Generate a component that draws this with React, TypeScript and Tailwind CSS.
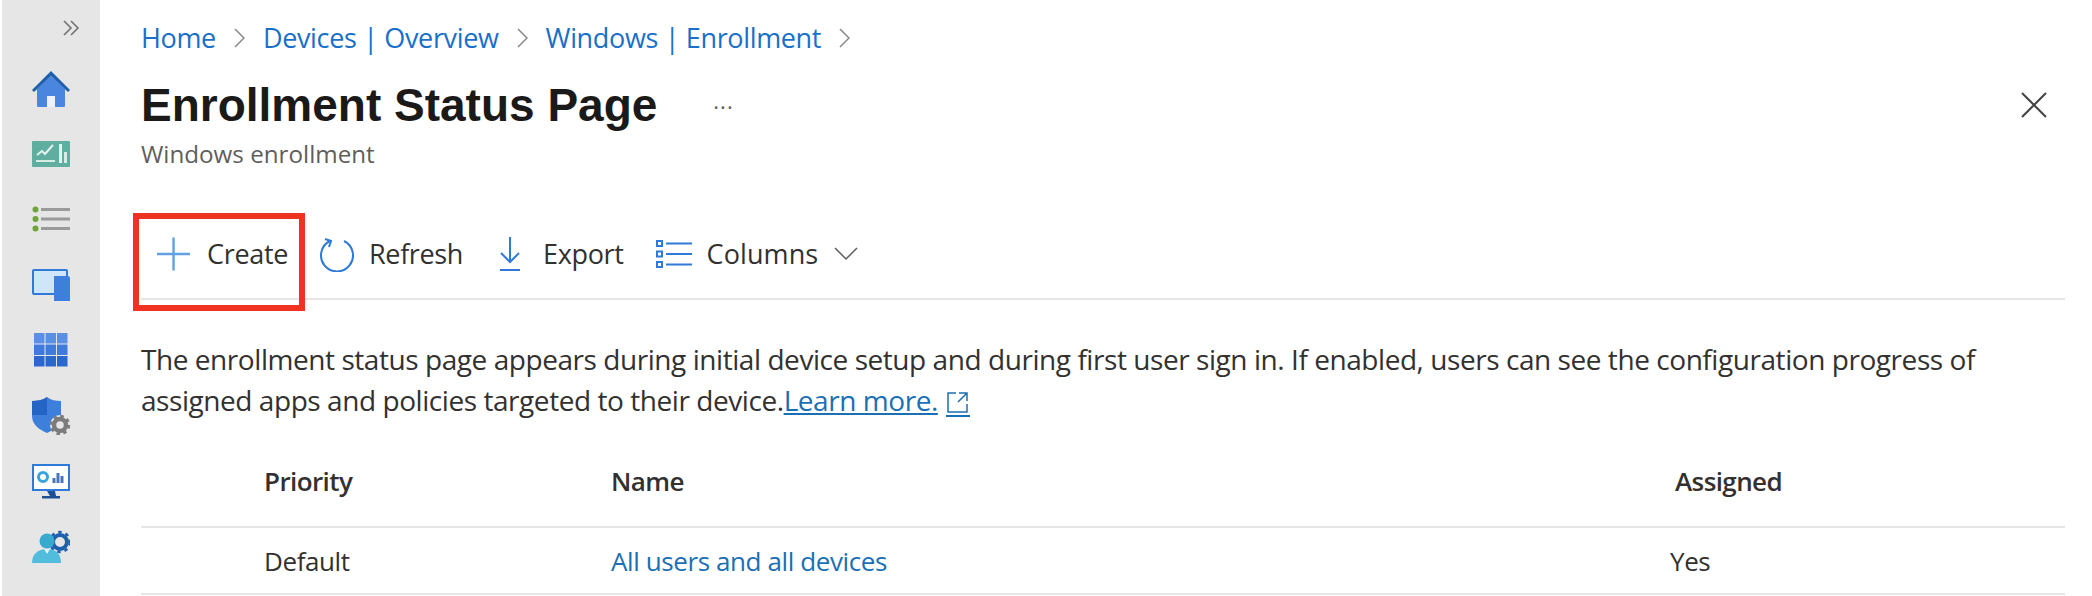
import React from "react";

const font = "font-['Open_Sans',sans-serif]";

function HomeIcon() {
  return (
    <svg width="38" height="38" viewBox="0 0 38 38">
      <path d="M5 19 19 6l14 13v17a1 1 0 0 1-1 1H6a1 1 0 0 1-1-1z" fill="#4a86e0" />
      <path d="M0 20 19 1l19 19-2 2L19 6 2 22z" fill="#1f5fae" />
      <rect x="15" y="26" width="8" height="11" fill="#eef1f5" />
    </svg>
  );
}

function ChartIcon() {
  return (
    <svg width="38" height="26" viewBox="0 0 38 26">
      <rect width="38" height="26" rx="1" fill="#5fae9f" />
      <path d="M5 14l5-4 3 3 8-9" stroke="#e4f3ef" strokeWidth="2" fill="none" />
      <rect x="4" y="19" width="19" height="2" fill="#d6ece6" />
      <rect x="27" y="3" width="3" height="19" fill="#e4f3ef" />
      <rect x="32" y="11" width="3" height="11" fill="#d6ece6" />
    </svg>
  );
}

function ListIcon() {
  return (
    <svg width="38" height="26" viewBox="0 0 38 26">
      <circle cx="3.500" cy="3.500" r="3" fill="#6fa53a" />
      <circle cx="3.500" cy="13" r="3" fill="#6fa53a" />
      <circle cx="3.500" cy="22.500" r="3" fill="#6fa53a" />
      <rect x="9" y="2" width="29" height="3" fill="#9a9a9a" />
      <rect x="9" y="11.500" width="29" height="3" fill="#9a9a9a" />
      <rect x="9" y="21" width="29" height="3" fill="#9a9a9a" />
    </svg>
  );
}

function DevicesIcon() {
  return (
    <svg width="38" height="32" viewBox="0 0 38 32">
      <rect x="1" y="1" width="34" height="24" rx="1" fill="#cfe6fa" stroke="#2f7ad8" strokeWidth="2" />
      <path d="M22 7h14a2 2 0 0 1 2 2v23H22z" fill="#3f7fdc" />
    </svg>
  );
}

function GridIcon() {
  const cells = [0, 11.500, 23];
  return (
    <svg width="34" height="34" viewBox="0 0 34 34">
      {cells.map((y, r) =>
        cells.map((x) => (
          <rect
            key={`${x}-${y}`}
            x={x}
            y={y}
            width="10.500"
            height="10.500"
            fill={r === 0 ? "#5a90e4" : r === 1 ? "#3f7bdb" : "#2a68cc"}
          />
        ))
      )}
    </svg>
  );
}

function ShieldIcon() {
  return (
    <svg width="38" height="38" viewBox="0 0 38 38">
      <path d="M15 0c4 3 9 4 14 4v15c0 9-7 14-14 17C8 33 0 28 0 19V4c5 0 11-1 15-4z" fill="#3f7fdc" />
      <path d="M15 0v18H0V4c5 0 11-1 15-4z" fill="#2464c4" />
      <circle cx="28" cy="28" r="10" fill="#e6e6e6" />
      <circle cx="28" cy="28" r="6" fill="none" stroke="#7b7b7b" strokeWidth="4.500" />
      <circle cx="28" cy="28" r="9" fill="none" stroke="#7b7b7b" strokeWidth="2.500" strokeDasharray="3.500 3.570" />
    </svg>
  );
}

function MonitorIcon() {
  return (
    <svg width="38" height="35" viewBox="0 0 38 35">
      <rect x="1" y="1" width="36" height="25" fill="#fff" stroke="#2f7ad8" strokeWidth="2" />
      <circle cx="11" cy="13" r="4.500" fill="none" stroke="#38a3dc" strokeWidth="3" />
      <path d="M22 19v-5M26 19V9M30 19v-7" stroke="#4a74b8" strokeWidth="3" />
      <path d="M15 27h8l1 5h-6z" fill="#1d4f96" />
      <rect x="10" y="32" width="18" height="2.500" fill="#1d4f96" />
    </svg>
  );
}

function UserGearIcon() {
  return (
    <svg width="38" height="33" viewBox="0 0 38 33">
      <circle cx="28" cy="12" r="7" fill="none" stroke="#1f5fae" strokeWidth="4" />
      <circle cx="28" cy="12" r="10" fill="none" stroke="#1f5fae" strokeWidth="2.500" strokeDasharray="3.500 4" />
      <circle cx="15" cy="11" r="7.500" fill="#38a9cf" />
      <path d="M0 33c0-9 6-14 15-14s14 5 14 14z" fill="#52bcdc" />
      <path d="M12 19h6l-3 5z" fill="#e6f5fa" />
    </svg>
  );
}

function SideItem({ children }: { children: React.ReactNode }) {
  return <div className="h-[65.4px] flex items-center justify-center shrink-0 blur-[0.5px]">{children}</div>;
}

function Chevron() {
  return (
    <svg width="11" height="20" viewBox="0 0 11 20" fill="none" stroke="#8a8886" strokeWidth="1.500">
      <path d="M1 1l9 9-9 9" />
    </svg>
  );
}

function ToolText({ children }: { children: React.ReactNode }) {
  return <span className="text-[27px] text-[#323130] tracking-[-0.35px]">{children}</span>;
}

export default function App() {
  return (
    <div className={`w-[2092px] h-[596px] overflow-hidden flex bg-white ${font}`}>
      <aside className="ml-[2px] w-[98px] shrink-0 bg-[#e6e6e6] flex flex-col overflow-hidden">
        <div className="h-[56px] shrink-0 flex justify-end items-center pr-[20px]">
          <svg width="17" height="16" viewBox="0 0 17 16" fill="none" stroke="#6f6f6f" strokeWidth="1.500">
            <path d="M1 1l7 7-7 7M8 1l7 7-7 7" />
          </svg>
        </div>
        <SideItem><HomeIcon /></SideItem>
        <SideItem><ChartIcon /></SideItem>
        <SideItem><ListIcon /></SideItem>
        <SideItem><DevicesIcon /></SideItem>
        <SideItem><GridIcon /></SideItem>
        <SideItem><ShieldIcon /></SideItem>
        <SideItem><MonitorIcon /></SideItem>
        <SideItem><UserGearIcon /></SideItem>
      </aside>

      <main className="flex-1 pl-[41px] pr-[27px] flex flex-col min-w-0">
        <nav className="h-[38px] mt-[19px] flex items-center gap-[18px] text-[27px] text-[#1a6fc9] tracking-[-0.35px]">
          <a>Home</a>
          <Chevron />
          <a>Devices | Overview</a>
          <Chevron />
          <a>Windows | Enrollment</a>
          <Chevron />
        </nav>

        <div className="flex items-center h-[60px] mt-[18px] relative">
          <h1 className="font-['Liberation_Sans',sans-serif] font-bold text-[46px] text-[#1b1a19]">Enrollment Status Page</h1>
          <span className="ml-[56px] text-[#605e5c] text-[22px] leading-none mb-[10px] tracking-[1px]">...</span>
          <svg className="ml-auto mr-[18px]" width="26" height="26" viewBox="0 0 26 26" stroke="#444" strokeWidth="2">
            <path d="M1 1l24 24M25 1L1 25" />
          </svg>
        </div>

        <p className="text-[24.200px] text-[#605e5c] leading-[30px] mt-[4px]">Windows enrollment</p>

        <div className="relative mt-[48px] h-[83px] border-b-2 border-[#e6e6e6] flex items-start pt-[17px]">
          <div className="relative flex items-center h-[40px] w-[147px] shrink-0">
            <div className="absolute left-[-8px] top-[-21px] w-[172px] h-[98px] border-[6px] border-[#f03223]" />
            <svg className="ml-[16px]" width="34" height="34" viewBox="0 0 34 34" stroke="#63a1e4" strokeWidth="2.500">
              <path d="M17 0v34M0 17h34" />
            </svg>
            <span className="ml-[17px]"><ToolText>Create</ToolText></span>
          </div>
          <div className="flex items-center h-[40px] ml-[31px]">
            <svg width="36" height="36" viewBox="0 0 36 36" fill="none" stroke="#2f7ad8" strokeWidth="2">
              <path d="M11 5a16 16 0 1 0 14 0" />
              <path d="M6 3l6 2-2 6" />
            </svg>
            <span className="ml-[14px]"><ToolText>Refresh</ToolText></span>
          </div>
          <div className="flex items-center h-[40px] ml-[35px]">
            <svg width="24" height="34" viewBox="0 0 24 34" fill="none" stroke="#2f7ad8" strokeWidth="2">
              <path d="M12 0v25M3 16l9 9 9-9M2 33h20" />
            </svg>
            <span className="ml-[21px]"><ToolText>Export</ToolText></span>
          </div>
          <div className="flex items-center h-[40px] ml-[32px]">
            <svg width="36" height="28" viewBox="0 0 36 28" fill="none" stroke="#2f7ad8" strokeWidth="2">
              <rect x="1" y="1" width="5" height="5" />
              <rect x="1" y="11.500" width="5" height="5" />
              <rect x="1" y="22" width="5" height="5" />
              <path d="M10 3.500h26M10 14h26M10 24.500h26" />
            </svg>
            <span className="ml-[15px] tracking-[0.1px]"><span className="text-[27px] text-[#323130]">Columns</span></span>
            <svg className="ml-[16px]" width="24" height="14" viewBox="0 0 24 14" fill="none" stroke="#605e5c" strokeWidth="1.500">
              <path d="M1 1l11 11L23 1" />
            </svg>
          </div>
        </div>

        <p className="mt-[39px] text-[28px] leading-[41px] text-[#323130] tracking-[-0.44px]">
          The enrollment status page appears during initial device setup and during first user sign in. If enabled, users can see the configuration progress of assigned apps and policies targeted to their device.
          <a className="text-[#1a6fb5] underline">Learn more.</a>
          <a className="inline-flex items-center ml-[8px] align-middle border-b-2 border-[#1a6fb5] pb-[1px]">
            <svg width="24" height="24" viewBox="0 0 24 24" fill="none" stroke="#1a6fb5" strokeWidth="1.500">
              <path d="M10 3H2v19h19v-8M13 3h8v8M21 3l-9 9" />
            </svg>
          </a>
        </p>

        <div className="mt-[15px] h-[92px] grid grid-cols-[470px_1064px_1fr] items-center border-b-2 border-[#e6e6e6] text-[26px] font-semibold text-[#323130] tracking-[-0.6px]">
          <span className="pl-[123px]">Priority</span>
          <span>Name</span>
          <span>Assigned</span>
        </div>
        <div className="h-[67px] pt-[2px] grid grid-cols-[470px_1059px_1fr] items-center border-b-2 border-[#e6e6e6] text-[26px] text-[#323130] tracking-[-0.4px]">
          <span className="pl-[123px]">Default</span>
          <a className="text-[#1a6fb5]">All users and all devices</a>
          <span>Yes</span>
        </div>
      </main>
    </div>
  );
}
